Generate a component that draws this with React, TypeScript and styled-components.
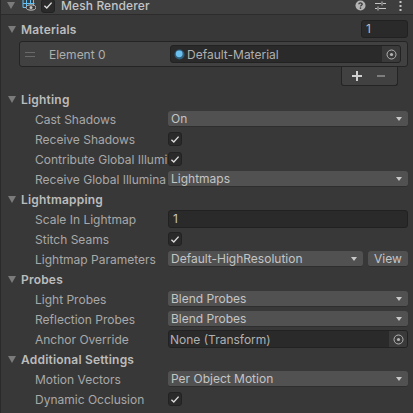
import React from "react";
import styled, { createGlobalStyle } from "styled-components";

const GlobalStyle = createGlobalStyle`
  html, body { margin: 0; padding: 0; background: #383838; }
  body { font-family: Inter, "Liberation Sans", sans-serif; font-size: 12px; color: #c4c4c4; }
`;

const Inspector = styled.div`
  box-sizing: border-box;
  width: 413px;
  height: 413px;
  overflow: hidden;
  background: #383838;
  border-left: 1px solid #2a2a2a;
`;

const TitleBar = styled.div`
  box-sizing: border-box;
  display: flex;
  align-items: center;
  height: 15px;
  padding: 0 0 3px 6px;
  border-bottom: 1px solid #2c2c2c;
  background: #3e3e3e;
`;

const TitleText = styled.span`
  margin-left: 6px;
  font-weight: 500;
  font-size: 12px;
  line-height: 11px;
  letter-spacing: 0.1px;
  color: #c4c4c4;
`;

const TitleIcons = styled.div`
  display: flex;
  align-items: center;
  margin-left: auto;
  margin-right: 11px;
  gap: 9px;
`;

const Foldout = styled.div<{ $top?: number }>`
  display: flex;
  align-items: center;
  height: 20px;
  padding-left: 7px;
  margin-top: ${(p) => p.$top ?? 0}px;
  font-weight: 600;
  font-size: 12px;
  letter-spacing: 0.2px;
  color: #bcbcbc;
`;

const FoldoutTitle = styled.span`
  margin-left: 5px;
`;

const Arrow = styled.span`
  display: block;
  flex: none;
  width: 0;
  height: 0;
  border-left: 4px solid transparent;
  border-right: 4px solid transparent;
  border-top: 7px solid #7b7b7b;
`;

const CountField = styled.div`
  box-sizing: border-box;
  width: 47px;
  height: 18px;
  margin-left: auto;
  margin-right: 5px;
  padding-left: 4px;
  border: 1px solid #212121;
  border-radius: 3px;
  background: #2a2a2a;
  font-weight: 400;
  line-height: 16px;
  letter-spacing: 0;
`;

const ListBox = styled.div`
  box-sizing: border-box;
  display: flex;
  align-items: center;
  height: 26px;
  margin: 2px 5px 0 18px;
  border: 1px solid #242424;
  border-radius: 3px;
  background: #414141;
`;

const DragHandle = styled.span`
  box-sizing: border-box;
  width: 10px;
  height: 5px;
  margin-left: 5px;
  border-top: 1px solid #6a6a6a;
  border-bottom: 1px solid #6a6a6a;
`;

const ElementLabel = styled.span`
  margin-left: 14px;
  width: 121px;
  color: #aeaeae;
`;

const ObjectField = styled.div<{ $inset?: boolean }>`
  box-sizing: border-box;
  display: flex;
  align-items: center;
  flex: 1;
  height: 18px;
  margin-right: ${(p) => (p.$inset ? 6 : 0)}px;
  padding-left: ${(p) => (p.$inset ? 3 : 1)}px;
  border: 1px solid #222;
  border-radius: 3px;
  background: #2a2a2a;
  white-space: nowrap;
  overflow: hidden;
  color: #b0b0b0;
`;

const PickerCell = styled.span`
  display: flex;
  align-items: center;
  justify-content: center;
  width: 18px;
  height: 16px;
  margin-left: auto;
  background: #3a3a3a;
`;

const ListFooterRow = styled.div`
  display: flex;
  justify-content: flex-end;
  margin-right: 15px;
`;

const ListFooter = styled.div`
  box-sizing: border-box;
  display: flex;
  align-items: center;
  gap: 15px;
  width: 57px;
  height: 19px;
  padding-left: 10px;
  border: 1px solid #242424;
  border-top: none;
  border-radius: 0 0 3px 3px;
  background: #414141;
`;

const Row = styled.div`
  display: flex;
  align-items: center;
  height: 20px;
  padding: 0 5px 0 34px;
`;

const Label = styled.span`
  flex: none;
  width: 133px;
  white-space: nowrap;
  color: #a8a8a8;
`;

const Select = styled.div`
  box-sizing: border-box;
  display: flex;
  align-items: center;
  flex: 1;
  height: 16px;
  padding: 0 6px 0 3px;
  border-radius: 3px;
  background: #515151;
  border-bottom: 1px solid #2e2e2e;
  color: #c4c4c4;
`;

const Caret = styled.span`
  width: 0;
  height: 0;
  margin-left: auto;
  border-left: 3.5px solid transparent;
  border-right: 3.5px solid transparent;
  border-top: 4.5px solid #c8c8c8;
`;

const Check = styled.span`
  box-sizing: border-box;
  flex: none;
  display: flex;
  align-items: center;
  justify-content: center;
  width: 14px;
  height: 14px;
  border: 1px solid #222;
  border-radius: 3px;
  background: #2a2a2a;
`;

const TextField = styled.div`
  box-sizing: border-box;
  flex: 1;
  height: 18px;
  padding-left: 4px;
  border: 1px solid #212121;
  border-radius: 3px;
  background: #2a2a2a;
  line-height: 16px;
`;

const ViewButton = styled.div`
  box-sizing: border-box;
  width: 40px;
  height: 16px;
  margin-left: 5px;
  border-radius: 3px;
  background: #515151;
  border-bottom: 1px solid #2e2e2e;
  text-align: center;
  line-height: 15px;
  color: #c4c4c4;
`;

const Spacer = styled.span<{ $w: number }>`
  flex: none;
  width: ${(p) => p.$w}px;
`;

const MoreWrap = styled.span`
  display: flex;
  margin-left: 4px;
`;

const BallWrap = styled.span`
  display: flex;
  flex: none;
  margin-right: 2px;
`;

const Tick = () => (
  <svg width="10" height="9" viewBox="0 0 10 9">
    <path d="M1.4 4.8 L3.8 7 L8.6 1.6" fill="none" stroke="#dcdcdc" strokeWidth="1.4" />
  </svg>
);

const Picker = () => (
  <PickerCell>
    <svg width="11" height="11" viewBox="0 0 11 11">
      <circle cx="5.5" cy="5.5" r="4.5" fill="none" stroke="#b4b4b4" strokeWidth="1" />
      <circle cx="5.5" cy="5.5" r="1.6" fill="#b4b4b4" />
    </svg>
  </PickerCell>
);

const MeshIcon = () => (
  <svg width="14" height="15" viewBox="0 0 14 15">
    <path d="M1 -2 V9.5 H11.5 V-2 M1 1.5 H12.5 M1 5.5 H12.5 M4.5 -2 V9 M8.5 -2 V6" fill="none" stroke="#62c1f5" strokeWidth="1" />
    <ellipse cx="9" cy="9.5" rx="4.8" ry="2.6" fill="#383838" stroke="#c4c4c4" strokeWidth="1" />
    <circle cx="9" cy="9.5" r="1.5" fill="#c4c4c4" />
  </svg>
);

const HelpIcon = () => (
  <svg width="11" height="11" viewBox="0 0 11 11">
    <circle cx="5.5" cy="5.5" r="5" fill="#b4b4b4" />
    <path d="M3.8 4.2 C3.8 2.4 7.2 2.4 7.2 4.2 C7.2 5.3 5.5 5.2 5.5 6.6" fill="none" stroke="#383838" strokeWidth="1.3" />
    <rect x="4.8" y="7.4" width="1.4" height="1.4" fill="#383838" />
  </svg>
);

const PresetIcon = () => (
  <svg width="11" height="10" viewBox="0 0 11 10">
    <path d="M0 2.5 H6 M8 2.5 H11 M0 7.5 H2 M4 7.5 H11 M7 0.5 V4.5 M3 5.5 V9.5" fill="none" stroke="#c4c4c4" strokeWidth="1" />
  </svg>
);

const MoreIcon = () => (
  <MoreWrap>
    <svg width="3" height="10" viewBox="0 0 3 10">
      <rect x="0.5" y="0" width="2" height="2" fill="#c4c4c4" />
      <rect x="0.5" y="4" width="2" height="2" fill="#c4c4c4" />
      <rect x="0.5" y="8" width="2" height="2" fill="#c4c4c4" />
    </svg>
  </MoreWrap>
);

const MaterialBall = () => (
  <BallWrap>
    <svg width="11" height="11" viewBox="0 0 11 11">
      <circle cx="5.5" cy="5.5" r="5" fill="#2f5f7c" />
      <circle cx="5.2" cy="4.8" r="3.4" fill="#6cc0ee" />
    </svg>
  </BallWrap>
);

const PlusIcon = () => (
  <svg width="10" height="10" viewBox="0 0 10 10">
    <path d="M5 0 V10 M0 5 H10" stroke="#d0d0d0" strokeWidth="2" />
  </svg>
);

const MinusIcon = () => (
  <svg width="8" height="10" viewBox="0 0 8 10">
    <path d="M0 5 H8" stroke="#7d7d7d" strokeWidth="2" />
  </svg>
);

const Section = ({ title, top, children }: { title: string; top?: number; children?: React.ReactNode }) => (
  <>
    <Foldout $top={top}>
      <Arrow />
      <FoldoutTitle>{title}</FoldoutTitle>
    </Foldout>
    {children}
  </>
);

const DropdownRow = ({ label, value }: { label: string; value: string }) => (
  <Row>
    <Label>{label}</Label>
    <Select>
      {value}
      <Caret />
    </Select>
  </Row>
);

const CheckRow = ({ label }: { label: string }) => (
  <Row>
    <Label>{label}</Label>
    <Check>
      <Tick />
    </Check>
  </Row>
);

export default function App() {
  return (
    <Inspector>
      <GlobalStyle />
      <TitleBar>
        <Arrow />
        <Spacer $w={7} />
        <MeshIcon />
        <Spacer $w={5} />
        <Check>
          <Tick />
        </Check>
        <TitleText>Mesh Renderer</TitleText>
        <TitleIcons>
          <HelpIcon />
          <PresetIcon />
          <MoreIcon />
        </TitleIcons>
      </TitleBar>

      <Foldout $top={4}>
        <Arrow />
        <FoldoutTitle>Materials</FoldoutTitle>
        <CountField>1</CountField>
      </Foldout>
      <ListBox>
        <DragHandle />
        <ElementLabel>Element 0</ElementLabel>
        <ObjectField $inset>
          <MaterialBall />
          Default-Material
          <Picker />
        </ObjectField>
      </ListBox>
      <ListFooterRow>
        <ListFooter>
          <PlusIcon />
          <MinusIcon />
        </ListFooter>
      </ListFooterRow>

      <Section title="Lighting" top={3}>
        <DropdownRow label="Cast Shadows" value="On" />
        <CheckRow label="Receive Shadows" />
        <CheckRow label="Contribute Global Illumi" />
        <DropdownRow label="Receive Global Illumina" value="Lightmaps" />
      </Section>

      <Section title="Lightmapping">
        <Row>
          <Label>Scale In Lightmap</Label>
          <TextField>1</TextField>
        </Row>
        <CheckRow label="Stitch Seams" />
        <Row>
          <Label>Lightmap Parameters</Label>
          <Select>
            Default-HighResolution
            <Caret />
          </Select>
          <ViewButton>View</ViewButton>
        </Row>
      </Section>

      <Section title="Probes">
        <DropdownRow label="Light Probes" value="Blend Probes" />
        <DropdownRow label="Reflection Probes" value="Blend Probes" />
        <Row>
          <Label>Anchor Override</Label>
          <ObjectField>
            None (Transform)
            <Picker />
          </ObjectField>
        </Row>
      </Section>

      <Section title="Additional Settings">
        <DropdownRow label="Motion Vectors" value="Per Object Motion" />
        <CheckRow label="Dynamic Occlusion" />
      </Section>
    </Inspector>
  );
}
